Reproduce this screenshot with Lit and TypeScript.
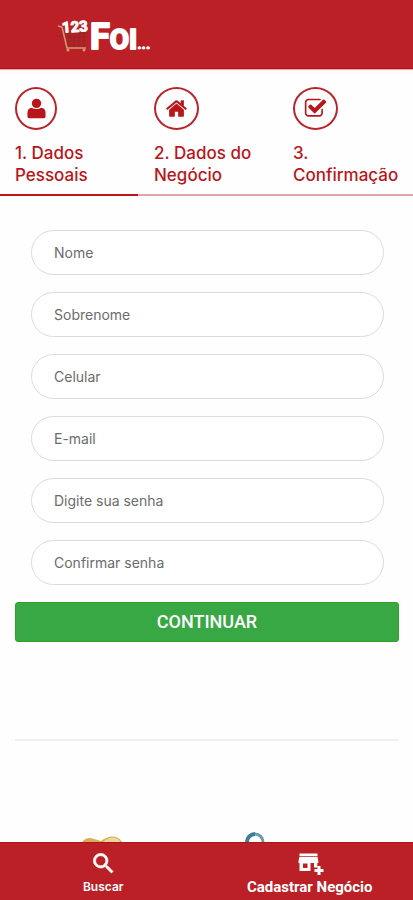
import { LitElement, html, css, svg } from "lit";
import { customElement } from "lit/decorators.js";

const userPath =
  "M896 131a365 365 0 1 0 0 730 365 365 0 1 0 0-730zM190 1250q0-400 340-420 160 110 366 110t366-110q340 20 340 420v260q0 150-150 150h-1112q-150 0-150-150z";
const homePath =
  "M1472 992v480q0 26-19 45t-45 19h-384v-384h-256v384h-384q-26 0-45-19t-19-45v-480q0-1 .5-3t.5-3l575-474 575 474q1 2 1 6zm223-69l-62 74q-8 9-21 11h-3q-13 0-21-7l-692-577-692 577q-12 8-24 7-13-2-21-11l-62-74q-8-10-7-23.500t11-21.500l719-599q32-26 76-26t76 26l244 204v-195q0-14 9-23t23-9h192q14 0 23 9t9 23v408l219 182q10 8 11 21.500t-7 23.500z";
const checkPath =
  "M1472 930v318q0 119-84.500 203.500t-203.500 84.500h-832q-119 0-203.500-84.500t-84.500-203.500v-832q0-119 84.500-203.500t203.500-84.500h832q63 0 117 25 15 7 18 23 3 17-9 29l-49 49q-10 10-23 10-3 0-9-2-23-6-45-6h-832q-66 0-113 47t-47 113v832q0 66 47 113t113 47h832q66 0 113-47t47-113v-254q0-13 9-22l64-64q10-10 23-10 6 0 12 3 20 8 20 29zm231-489l-814 814q-24 24-57 24t-57-24l-430-430q-24-24-24-57t24-57l110-110q24-24 57-24t57 24l263 263 647-647q24-24 57-24t57 24l110 110q24 24 24 57t-24 57z";
const searchPath =
  "M15.5 14h-.79l-.28-.27A6.471 6.471 0 0 0 16 9.500 6.500 6.500 0 1 0 9.500 16c1.610 0 3.090-.59 4.230-1.570l.27.28v.79l5 4.990L20.490 19l-4.990-5zm-6 0C7.010 14 5 11.990 5 9.500S7.010 5 9.500 5 14 7.010 14 9.500 11.990 14 9.500 14z";
const storePath =
  "M3.500 3.500h18v2.500h-18zM3.500 6.800h18l.8 4.200v2h-1v4.500h-3.300v-4.500h-3.500v8h-11v-8h-1v-2zM7 13.500v4.500h4.500v-4.500zM21.500 16h3v3h3v3h-3v3h-3v-3h-3v-3h3z";

const steps = [
  { label: "1. Dados Pessoais", path: userPath },
  { label: "2. Dados do Negócio", path: homePath },
  { label: "3. Confirmação", path: checkPath },
];

const fields = [
  { name: "nome", label: "Nome", type: "text" },
  { name: "sobrenome", label: "Sobrenome", type: "text" },
  { name: "celular", label: "Celular", type: "tel" },
  { name: "email", label: "E-mail", type: "email" },
  { name: "senha", label: "Digite sua senha", type: "password" },
  { name: "confirmar", label: "Confirmar senha", type: "password" },
];

@customElement("app-root")
export class AppRoot extends LitElement {
  static styles = css`
    :host {
      display: flex;
      flex-direction: column;
      height: 100vh;
      background: #fefefe;
      font-family: Inter, "Liberation Sans", sans-serif;
    }
    * {
      box-sizing: border-box;
    }
    .header {
      flex: none;
      height: 69px;
      padding: 12px 56px;
      background: #ba2026;
      border-bottom: 1px solid #b01217;
      box-shadow: 0 1px 1px #e9a9ab;
    }
    .logo {
      display: inline-block;
    }
    .logo svg {
      display: block;
      width: 96px;
      height: 44px;
    }
    .word {
      fill: #fff;
      stroke: #fff;
      stroke-linejoin: round;
      stroke-width: 2px;
      font: 700 28px Roboto, "Liberation Sans", sans-serif;
    }
    .big {
      font-size: 36px;
    }
    .small {
      font-size: 15px;
      stroke-width: 1px;
    }
    .main {
      flex: 1;
      min-height: 0;
      overflow: hidden;
    }
    .steps {
      display: grid;
      grid-template-columns: repeat(3, 1fr);
      gap: 19px;
      margin: 0;
      padding: 18px 0 8px 15px;
      list-style: none;
    }
    .step {
      color: #b9161c;
      font-size: 17px;
      line-height: 22px;
      font-weight: 500;
    }
    .ring {
      display: flex;
      align-items: center;
      justify-content: center;
      width: 45px;
      height: 43px;
      margin-bottom: 12px;
      border: 2px solid #b9252b;
      border-radius: 50%;
    }
    .first .ring {
      width: 42px;
    }
    .ring svg {
      width: 23px;
      height: 23px;
      fill: #b9161c;
    }
    .progress {
      height: 2px;
      background: #dfa3a9;
    }
    .bar {
      width: 33.333%;
      height: 100%;
      background: #b9161c;
    }
    .form {
      padding: 34px 14px 0 15px;
    }
    .fields {
      display: flex;
      flex-direction: column;
      gap: 17px;
      padding: 0 15px 0 16px;
    }
    .input {
      display: block;
      width: 100%;
      height: 45px;
      padding: 0 22px;
      border: 1px solid #dcdcdc;
      border-radius: 23px;
      outline: none;
      background: #fff;
      color: #444;
      font: 400 14px/20px Inter, "Liberation Sans", sans-serif;
    }
    .input::placeholder {
      color: #6c6c6c;
      opacity: 1;
    }
    .submit {
      display: block;
      width: 100%;
      height: 40px;
      margin-top: 17px;
      padding: 0;
      border: 1px solid #34a02a;
      border-radius: 3px;
      background: #38a844;
      color: #fff;
      font: 500 18px/22px Roboto, "Liberation Sans", sans-serif;
    }
    .rule {
      height: 2px;
      margin: 97px 14px 0 15px;
      border: 0;
      background: #efefef;
    }
    .art {
      display: grid;
      grid-template-columns: 1fr 1fr;
      padding-top: 90px;
    }
    .art svg {
      display: block;
      width: 48px;
      height: 48px;
    }
    .left svg {
      margin-left: 79px;
    }
    .right svg {
      margin-left: 32px;
    }
    .nav {
      flex: none;
      display: grid;
      grid-template-columns: 1fr 1fr;
      height: 58px;
      background: #ba2026;
      border-top: 1px solid #b01217;
    }
    .link {
      display: flex;
      flex-direction: column;
      align-items: center;
      padding-top: 7px;
      color: #fff;
      text-decoration: none;
      font: 600 12px/20px Inter, "Liberation Sans", sans-serif;
    }
    .link.wide {
      font: 700 15px/20px Roboto, "Liberation Sans", sans-serif;
    }
    .link svg {
      width: 27px;
      height: 27px;
      fill: #fff;
      overflow: visible;
    }
  `;

  render() {
    return html`
      <header class="header">
        <a class="logo" href="#" aria-label="123 Foi">
          <svg viewBox="0 0 96 44">
            <path
              d="M6 21h25M7 25h24M9 29h21M10 33h19M13 20v16M18 20v16M23 20v16M28 20v16M0 24h8"
              fill="none"
              stroke="#8f2a26"
              stroke-width="1"
            />
            <path d="M2 14l4 1 5 21h19" fill="none" stroke="#d49a74" stroke-width="1.500" />
            <circle cx="12" cy="38" r="1.500" fill="#d49a74" />
            <circle cx="28" cy="38" r="1.500" fill="#d49a74" />
            <text class="word small" x="6" y="20" transform="rotate(-4 18 16)">123</text>
            <text class="word" x="34" y="37"><tspan class="big">F</tspan>OI<tspan class="small">...</tspan></text>
          </svg>
        </a>
      </header>
      <main class="main">
        <ol class="steps">
          ${steps.map(
            (s, i) => html`<li class="step ${i === 0 ? "first" : ""}">
              <div class="ring">
                <svg viewBox="0 0 1792 1792" aria-hidden="true">${svg`<path d=${s.path} />`}</svg>
              </div>
              ${s.label}
            </li>`
          )}
        </ol>
        <div class="progress"><div class="bar"></div></div>
        <form class="form">
          <div class="fields">
            ${fields.map(
              (f) => html`<input
                class="input"
                name=${f.name}
                type=${f.type}
                placeholder=${f.label}
                aria-label=${f.label}
              />`
            )}
          </div>
          <button class="submit" type="button">CONTINUAR</button>
        </form>
        <hr class="rule" />
        <div class="art" aria-hidden="true">
          <div class="left">
            <svg viewBox="0 0 48 48">
              <path d="M3 11q5-6 12-3l7 2q8-6 15-4 6 2 7 8l-3 22H6z" fill="#d9ae55" />
              <path d="M24 11q7-6 13-4 5 2 5 6z" fill="#ead79a" />
            </svg>
          </div>
          <div class="right">
            <svg viewBox="0 0 48 48">
              <circle cx="16" cy="11" r="8" fill="none" stroke="#6b9cab" stroke-width="3" />
              <path d="M8 11a8 8 0 0 1 8-8" fill="none" stroke="#3f7f92" stroke-width="4" />
            </svg>
          </div>
        </div>
      </main>
      <nav class="nav">
        <a class="link" href="#buscar">
          <svg viewBox="0 0 24 24" aria-hidden="true"><path d=${searchPath} stroke="#fff" stroke-width="0.600" /></svg>
          Buscar
        </a>
        <a class="link wide" href="#cadastrar">
          <svg viewBox="0 0 27 27" aria-hidden="true"><path d=${storePath} fill-rule="evenodd" /></svg>
          Cadastrar Negócio
        </a>
      </nav>
    `;
  }
}
